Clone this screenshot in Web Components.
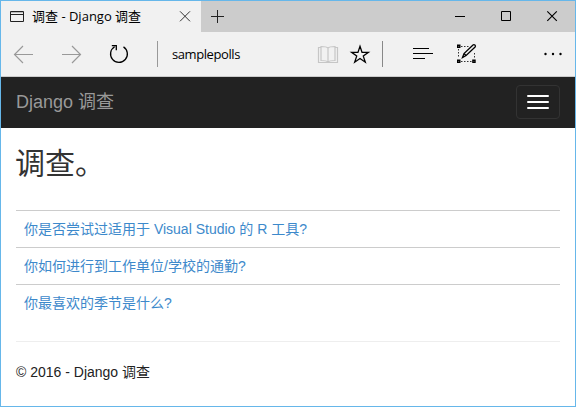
<!DOCTYPE html>
<html lang="zh-CN"><head><meta charset="utf-8"><title>调查 - Django 调查</title>
<style>
html,body{margin:0;height:100%}
body{font-family:"Liberation Sans","Noto Sans CJK SC",sans-serif}
</style></head><body>
<browser-window>
  <tab-strip slot="tabs">调查 - Django 调查</tab-strip>
  <tool-bar slot="toolbar">samplepolls</tool-bar>
  <nav-bar>Django 调查</nav-bar>
  <poll-page>
    <span slot="title">调查。</span>
    <poll-item>你是否尝试过适用于 Visual Studio 的 R 工具?</poll-item>
    <poll-item>你如何进行到工作单位/学校的通勤?</poll-item>
    <poll-item>你最喜欢的季节是什么?</poll-item>
    <span slot="footer">© 2016 - Django 调查</span>
  </poll-page>
</browser-window>
<script>
function define(name, html){
  const t=document.createElement('template');t.innerHTML=html;
  customElements.define(name,class extends HTMLElement{
    constructor(){super();this.attachShadow({mode:'open'}).append(t.content.cloneNode(true));}
  });
}
define('browser-window',`<style>
:host{display:flex;flex-direction:column;box-sizing:border-box;width:576px;height:407px;border:1px solid #66b7ea;background:#fff;overflow:hidden}
</style><slot name="tabs"></slot><slot name="toolbar"></slot><slot></slot>`);

define('tab-strip',`<style>
:host{display:flex;height:31px;flex:none;background:#ccc;color:#000;font:13px "Open Sans","Noto Sans CJK SC",sans-serif}
.tab{display:flex;align-items:center;box-sizing:border-box;width:200px;background:#f1f1f1;padding:0 9px 0 8px}
.label{flex:1;margin-left:7px;white-space:nowrap;letter-spacing:0;line-height:31px}
svg{display:block;fill:none;stroke:#000;flex:none}
.gap{flex:1}
</style>
<div class="tab"><svg width="16" height="15" viewBox="0 0 16 15"><path d="M1.5 2.5h13v10h-13zM1 5.5h14" stroke="#222"/><path d="M2 3.500h12" stroke="#bbb"/></svg>
<span class="label"><slot></slot></span>
<svg width="14" height="31" viewBox="0 0 14 31"><path d="M2 10.3l10 10M12 10.3l-10 10" stroke="#333"/></svg></div>
<svg width="32" height="31" viewBox="0 0 32 31"><path d="M10 15.5h13M16.5 9v13" stroke="#222"/></svg>
<span class="gap"></span>
<svg width="46" height="31"><path d="M24 15.500h10"/></svg>
<svg width="46" height="31"><path d="M24.500 10.500h9v9h-9z"/></svg>
<svg width="52" height="31"><path d="M24.300 10.300l9.500 9.500M33.800 10.300l-9.500 9.500" stroke-width="1.150"/></svg>`);

define('tool-bar',`<style>
:host{display:flex;box-sizing:border-box;height:45px;flex:none;background:#f1f1f1;border-bottom:1px solid #ccc;color:#000;font:13px/44px "Open Sans","Noto Sans CJK SC",sans-serif}
svg{display:block;fill:none;stroke:#000;flex:none}
.address{width:140px;letter-spacing:-.42px}
</style>
<svg width="171" height="44" viewBox="1 32 171 44">
<g stroke="#999" stroke-width="1.150"><path d="M14.500 54.500H33M23 46l-8.500 8.500L23 63M62 54.500h18.500M72 46l8.500 8.500L72 63"/></g>
<path d="M123.500 46.900A8.400 8.400 0 1 1 114.600 46.800M111.800 45.700h4.500v4.600" stroke-width="1.300"/>
<path d="M157.500 41v26" stroke="#999"/></svg>
<span class="address"><slot></slot></span>
<svg width="263" height="44" viewBox="312 32 263 44">
<g stroke="#c6c6c6" stroke-width="1.200"><path d="M320.500 47.500h-2v15h19v-15h-2M328 48c-1.500-1.500-3.500-1.500-7-1.500V60.500c3.500 0 5.500 0 7 1.500 1.500-1.500 3.500-1.500 7-1.500v-14c-3.500 0-5.500 0-7 1.500V62"/></g>
<path d="M360 46.300l2.050 6.050h6.350l-5.100 3.750 2 6.100-5.300-3.750-5.300 3.750 2-6.100-5.100-3.750h6.350z" stroke-width="1.300"/>
<path d="M382.500 41v26" stroke="#888"/>
<path d="M413 48.500h16M413 53.500h20M413 58.500h12" stroke-width="1.100"/>
<path d="M461 46.500h9M458.500 49v9M461 61.500h11M474.500 53v5" stroke-dasharray="1.500 1.500" stroke="#333"/>
<path d="M457.700 45.200h2.100v2.100h-2.100zM457.700 60.200h2.100v2.100h-2.100zM472.900 60.200h2.100v2.100h-2.100z" stroke-width="1.400"/>
<path d="M462.500 57.500l1.500-4 9-8.500c1.200-1.100 3.200.7 2.100 2l-9 8.500zM464 53.500l2 2" stroke-width="1.300"/>
<g fill="#000" stroke="none"><circle cx="545.500" cy="54" r="1.200"/><circle cx="553" cy="54" r="1.200"/><circle cx="560.500" cy="54" r="1.200"/></g>
</svg>`);

define('nav-bar',`<style>
:host{display:flex;align-items:center;justify-content:space-between;box-sizing:border-box;height:51px;flex:none;background:#222;color:#999;padding:0 15px 2px;font-size:18px;line-height:47px}
span{white-space:nowrap;padding-top:2px}
button{display:flex;flex-direction:column;align-items:center;justify-content:center;gap:4px;box-sizing:border-box;width:44px;height:34px;margin:0;padding:0;background:none;border:1px solid #333;border-radius:4px}
i{display:block;width:22px;height:2px;background:#fff;border-radius:1px}
</style><span><slot></slot></span><button aria-label="menu"><i></i><i></i><i></i></button>`);

define('poll-page',`<style>
:host{display:block;padding:0 15px;color:#333}
h2{margin:0 0 0 -1px;height:82px;font-size:30px;font-weight:400;line-height:71px}
.list{border-bottom:1px solid #eee;height:131px}
footer{font-size:14px;line-height:20px;margin-top:20px;color:#222;letter-spacing:0}
</style><h2><slot name="title"></slot></h2><div class="list"><slot></slot></div><footer><slot name="footer"></slot></footer>`);

define('poll-item',`<style>
:host{display:block;box-sizing:border-box;height:37px;border-top:1px solid #ccc;padding:0 8px}
a{color:#3d89cb;font-size:14px;line-height:36px;white-space:nowrap;display:block}
</style><a><slot></slot></a>`);
</script></body></html>
